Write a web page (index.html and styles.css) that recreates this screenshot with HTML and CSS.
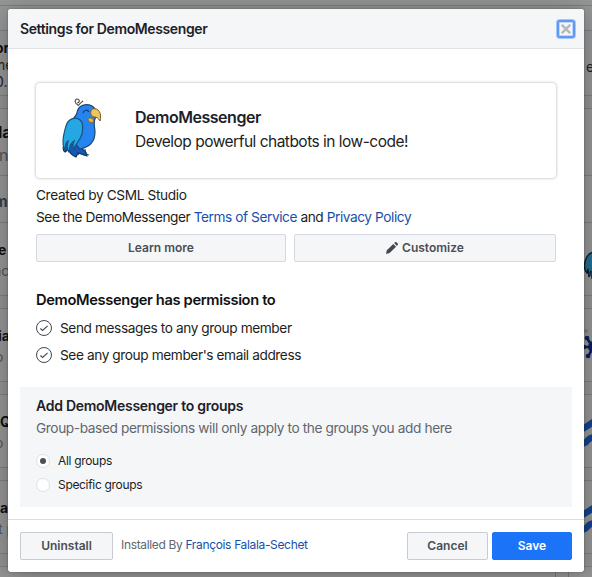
FILE: index.html
```html
<!DOCTYPE html>
<html lang="en">
<head>
<meta charset="utf-8">
<title>Settings for DemoMessenger</title>
<link rel="stylesheet" href="styles.css">
</head>
<body>
<svg class="defs" width="0" height="0">
  <defs>
    <symbol id="bird" viewBox="0 0 42 62">
      <path d="M17 7c-3-1-4-5-1-6 3 0 3 4 0 4M17 8c2-3 4-4 5-5" fill="none" stroke="#555" stroke-width="1.2"/>
      <path d="M24 51l1 5 3 1M25 55l-3 2M17 57l2-4" fill="none" stroke="#555" stroke-width="1.2"/>
      <path d="M4 44c-3 5-2 9 0 10l4-3c0 4 4 7 7 8l2-4 9 3c0-5-7-9-11-11z" fill="#1657b8" stroke="#12345e" stroke-width="1.2"/>
      <path d="M16 15c1-8 9-10 15-7 5 3 5 9 3 13-2 4 0 9 0 13 0 9-5 15-15 17-6-4-9-20-8-27 0-4 4-5 5-9z" fill="#2684f0" stroke="#22466f" stroke-width="1.2"/>
      <path d="M31 11c7-2 10 5 8 12-2-3-3-4-6-4-4-1-4-6-2-8z" fill="#efc45c" stroke="#765b31" stroke-width="1"/>
      <path d="M27 21c2-2 5-1 6 2-2 3-6 1-6-2z" fill="#efb52f" stroke="#765b31" stroke-width=".7"/>
      <path d="M22 15c1-3 4-4 6-1" fill="none" stroke="#113c7b" stroke-width="1.2"/>
      <path d="M5 28c2-7 9-10 14-6 4 3 3 9 2 14-2 7-7 10-8 15-2-2-1-5 0-8-4 3-5 7-5 11-3-3-2-7-1-11-3 2-3 6-3 10-4-8-1-18 1-25z" fill="#25a7e3" stroke="#17547b" stroke-width="1.2"/>
    </symbol>
    <symbol id="check" viewBox="0 0 16 16">
      <circle cx="8" cy="8" r="7.5" fill="none" stroke="#444950"/>
      <path d="M4.4 8.5l2.2 2 5-4.7" fill="none" stroke="#444950" stroke-width="1.1"/>
    </symbol>
    <symbol id="waves" viewBox="0 0 8 72">
      <path d="M-2 34Q4 31 12 25M-2 49Q2 48 4 45Q7 42 12 42" fill="none" stroke="#15418c" stroke-width="6.5"/>
    </symbol>
  </defs>
</svg>
<div class="page">
  <div class="row row-bar"></div>
  <div class="row row-gap-top"></div>
  <div class="row row-intro"><div class="peek"><b class="cut-more">or</b><span class="dark cut-wide">me</span><span class="dark cut-more">0.</span></div><span class="right-text">e</span></div>
  <div class="row row-gap"></div>
  <div class="row row-title"><div class="peek"><b class="large cut">la</b><span class="large cut-more">in</span></div></div>
  <div class="row row-tab"><div class="peek"><b class="muted">m</b></div></div>
  <div class="row row-app"><div class="peek"><b class="cut">e</b><span class="cut-wide">nc</span></div><svg class="art" viewBox="0 0 8 72"><path d="M10 29C1 30-2 45 3 50l1-4 1 8 2-6 1 7h3V29z" fill="#236f8e" stroke="#121b22" stroke-width="1.4"/><path d="M4 51l4 3v-5z" fill="#123f82"/></svg></div>
  <div class="row row-gap"></div>
  <div class="row row-app"><div class="peek"><b class="cut">ia</b><span class="cut-more">o</span></div><svg class="art" viewBox="0 0 8 72"><path d="M3 29l3 5M-1 38h7M4 48l3-6" fill="none" stroke="#091f5b" stroke-width="2.5"/><circle cx="3" cy="29" r="2.3" fill="#091f5b"/><circle cx="4" cy="47" r="2.3" fill="#091f5b"/><circle cx="0" cy="38" r="2.3" fill="#091f5b"/><circle cx="10" cy="38" r="6" fill="#091f5b"/><circle cx="2" cy="22" r="2" fill="#777c8b"/></svg></div>
  <div class="row row-gap"></div>
  <div class="row row-app"><div class="peek"><b>Q</b><span class="cut-more">o</span></div><svg class="art"><use href="#waves"/></svg></div>
  <div class="row row-gap"></div>
  <div class="row row-app"><div class="peek"><b>a</b><span class="cut">t p</span></div><svg class="art"><use href="#waves"/></svg></div>
  <div class="row row-gap"></div>
  <div class="row row-last"><i></i><i></i></div>
</div>

<div class="modal">
  <div class="header">
    <h1>Settings for DemoMessenger</h1>
    <button class="close" aria-label="Close"><svg width="10" height="10" viewBox="0 0 10 10"><path d="M.8.8l8.4 8.4M9.2.8L.8 9.2" stroke="#b5b8bd" stroke-width="2.4"/></svg></button>
  </div>
  <div class="content">
    <div class="card">
      <svg class="logo"><use href="#bird"/></svg>
      <div class="card-text"><h2>DemoMessenger</h2><p>Develop powerful chatbots in low-code!</p></div>
    </div>
    <div class="about">
      <p class="created">Created by CSML Studio</p>
      <p class="terms">See the DemoMessenger <a>Terms of Service</a> and <a>Privacy Policy</a></p>
    </div>
    <div class="actions">
      <button class="btn learn">Learn more</button>
      <button class="btn customize"><svg width="12" height="12" viewBox="0 0 12 12"><path d="M0 12l.8-3.7L7.3 1.9l2.8 2.8-6.5 6.4zM8.1 1.1L9.2.2q.7-.4 1.3.1l1.2 1.2q.6.6.1 1.3l-.9 1.1z" fill="#444950"/></svg><span>Customize</span></button>
    </div>
    <div class="permissions">
      <h3>DemoMessenger has permission to</h3>
      <div class="permission"><svg><use href="#check"/></svg><span>Send messages to any group member</span></div>
      <div class="permission"><svg><use href="#check"/></svg><span>See any group member's email address</span></div>
    </div>
    <div class="groups">
      <h3>Add DemoMessenger to groups</h3>
      <p>Group-based permissions will only apply to the groups you add here</p>
      <div class="option"><span class="radio selected"></span><span>All groups</span></div>
      <div class="option"><span class="radio"></span><span>Specific groups</span></div>
    </div>
  </div>
  <div class="footer">
    <button class="btn uninstall">Uninstall</button>
    <span class="installed">Installed By <a>François Falala-Sechet</a></span>
    <button class="btn cancel">Cancel</button>
    <button class="btn save">Save</button>
  </div>
</div>
</body>
</html>
```
FILE: styles.css
```css
* { box-sizing: border-box; }
body { margin: 0; width: 592px; height: 577px; overflow: hidden; font-family: Inter, "Liberation Sans", sans-serif; font-size: 14px; color: #1c1e21; background: #8b8b8b; }
h1, h2, h3, p { margin: 0; }
a { color: #174fab; }
.defs { display: block; height: 0; }
.page { height: 577px; overflow: hidden; background: #969696; }
.row { display: flex; justify-content: space-between; border-bottom: 1px solid #7f7f7f; overflow: hidden; }
.row-bar { height: 6px; background: #969897; }
.row-gap-top { height: 25px; background: #969897; }
.row-intro { height: 65px; }
.row-gap { height: 13px; background: #939393; }
.row-title { height: 67px; }
.row-tab { height: 47px; }
.row-app { height: 73px; }
.row-last { height: 11px; border: 0; justify-content: flex-end; padding-right: 23px; gap: 12px; }
.row-last i { width: 1px; background: #777; }
.peek { width: 8px; display: flex; flex-direction: column; align-items: flex-start; white-space: nowrap; color: #515358; line-height: 21px; padding-top: 16px; }
.peek b { color: #101113; }
.peek .dark { color: #222; }
.peek .large { font-size: 16px; line-height: 23px; }
.peek .cut { margin-left: -2px; }
.peek .cut-more { margin-left: -5px; }
.peek .cut-wide { margin-left: -7px; }
.peek .muted { color: #393e46; font-size: 15px; margin-left: -6px; }
.row-intro .peek { padding-top: 8px; line-height: 17px; }
.row-title .peek { padding-top: 12px; }
.row-tab .peek { padding-top: 15px; }
.right-text { width: 6px; padding-top: 27px; color: #222; }
.art { flex: none; width: 8px; height: 72px; }

.modal { position: absolute; left: 8px; top: 9px; width: 576px; height: 563px; display: flex; flex-direction: column; background: #fff; border-radius: 3px; box-shadow: 0 2px 26px rgba(0,0,0,.3), 0 0 2px rgba(0,0,0,.35); overflow: hidden; }
.header { height: 40px; flex: none; background: #f5f6f7; border-bottom: 1px solid #e1e2e5; display: flex; align-items: center; justify-content: space-between; padding: 1px 9px 0 12px; }
.header h1 { font-size: 14px; font-weight: 600; letter-spacing: -.38px; line-height: 20px; color: #1d2129; }
.close { display: flex; align-items: center; justify-content: center; width: 18px; height: 18px; padding: 0; background: #f5f6f7; border: 2px solid #5e99f4; border-radius: 3px; box-shadow: 0 0 0 1px #a7c6f8, inset 0 0 0 1px #c1d7fa; }
.content { height: 470px; flex: none; padding: 34px 12px 0; }
.card { height: 95px; margin: 0 16px; display: flex; align-items: center; padding-left: 25px; border-radius: 4px; box-shadow: 0 0 3px rgba(0,0,0,.35); }
.logo { width: 42px; height: 62px; margin: -4px 32px 0 0; flex: none; }
.card-text { padding-bottom: 3px; }
.card h2 { font-size: 16px; line-height: 24px; font-weight: 600; letter-spacing: -.48px; color: #1d2129; }
.card p { font-size: 15.5px; line-height: 25px; letter-spacing: -.51px; }
.about { padding: 6px 16px 0; font-size: 13.7px; line-height: 22px; }
.created { letter-spacing: -.38px; }
.terms { letter-spacing: -.435px; }
.actions { display: flex; gap: 8px; padding: 6px 16px 0; }
.btn { height: 28px; padding: 0; border: 1px solid #d5d8de; border-radius: 2px; background: #f5f6f7; color: #4b4f56; font: 600 12px/26px Inter, "Liberation Sans", sans-serif; }
.learn { width: 250px; }
.customize { width: 262px; display: flex; justify-content: center; align-items: center; gap: 4px; }
.permissions { padding: 27px 16px 0; }
.permissions h3 { font-size: 14.7px; line-height: 22px; font-weight: 600; color: #111; letter-spacing: -.36px; }
.permission { height: 27px; display: flex; align-items: center; gap: 8px; padding-top: 6px; font-size: 13.7px; letter-spacing: -.42px; }
.permission svg { width: 16px; height: 16px; }
.groups { height: 120px; margin-top: 22px; padding: 8px 16px; background: #f5f6f7; }
.groups h3 { font-size: 14px; line-height: 22px; font-weight: 600; color: #1d2129; letter-spacing: -.27px; }
.groups p { font-size: 13.7px; line-height: 22px; color: #606770; letter-spacing: -.4px; }
.option { height: 24px; display: flex; align-items: center; gap: 8px; font-size: 12px; line-height: 14px; letter-spacing: -.32px; }
.groups p + .option { margin-top: 10px; }
.radio { width: 14px; height: 14px; display: flex; align-items: center; justify-content: center; background: #fff; border: 1px solid #dfe1e5; border-radius: 50%; }
.selected::after { content: ""; width: 6px; height: 6px; background: #4b4f56; border-radius: 50%; }
.footer { height: 53px; display: flex; padding: 12px 12px 0; border-top: 1px solid #dadde1; }
.uninstall { width: 93px; border-color: #c8ccd2; }
.installed { margin-left: 8px; line-height: 26px; font-size: 12px; letter-spacing: -.34px; color: #606770; }
.cancel { width: 81px; margin-left: auto; border-color: #c8ccd2; }
.save { width: 80px; margin-left: 4px; background: #1b74f8; border-color: #1b74f8; color: #fff; }
```
